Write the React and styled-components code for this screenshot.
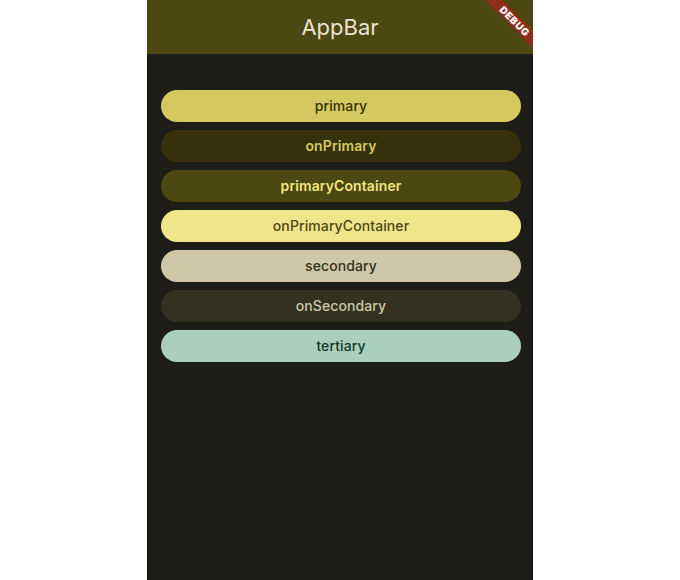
import styled, { createGlobalStyle } from "styled-components";

const swatches = [
  { name: "primary", bg: "#d4c95e", fg: "#363100", weight: 500 },
  { name: "onPrimary", bg: "#36310a", fg: "#d4c95e", weight: 600 },
  { name: "primaryContainer", bg: "#4d4712", fg: "#f1e580", weight: 600 },
  { name: "onPrimaryContainer", bg: "#efe68c", fg: "#4d4712", weight: 500 },
  { name: "secondary", bg: "#cec8a9", fg: "#33311c", weight: 500 },
  { name: "onSecondary", bg: "#333120", fg: "#cec8a9", weight: 500 },
  { name: "tertiary", bg: "#aad0bd", fg: "#133728", weight: 500 },
];

function App() {
  return (
    <>
      <GlobalStyle />
      <Page>
        <Phone>
          <AppBar>
            <Title>AppBar</Title>
            <Banner>
              <BannerText>DEBUG</BannerText>
            </Banner>
          </AppBar>
          <Body>
            {swatches.map((s) => (
              <Swatch key={s.name} $bg={s.bg} $fg={s.fg} $weight={s.weight}>
                {s.name}
              </Swatch>
            ))}
          </Body>
        </Phone>
      </Page>
    </>
  );
}

const GlobalStyle = createGlobalStyle`
  html, body {
    margin: 0;
    padding: 0;
    background: #ffffff;
  }
  body {
    font-family: Inter, "Noto Sans", sans-serif;
  }
`;

const Page = styled.div`
  display: flex;
  justify-content: center;
  width: 680px;
  height: 580px;
`;

const Phone = styled.div`
  width: 386px;
  height: 580px;
  display: flex;
  flex-direction: column;
  background: #1e1c16;
  overflow: hidden;
`;

const AppBar = styled.header`
  position: relative;
  height: 54px;
  flex-shrink: 0;
  display: flex;
  align-items: center;
  justify-content: center;
  background: #4c4713;
  overflow: hidden;
`;

const Title = styled.h1`
  margin: 0;
  font-size: 22px;
  font-weight: 400;
  color: #e9e3cf;
`;

const Banner = styled.div`
  position: absolute;
  top: 15px;
  right: -42px;
  width: 120px;
  height: 12px;
  display: flex;
  align-items: center;
  justify-content: center;
  background: rgba(183, 28, 28, 0.63);
  transform: rotate(45deg);
`;

const BannerText = styled.span`
  font-size: 10px;
  font-weight: 900;
  line-height: 1;
  color: #ffffff;
  letter-spacing: 0.6px;
`;

const Body = styled.main`
  display: flex;
  flex-direction: column;
  gap: 8px;
  padding: 36px 12px 0 14px;
`;

const Swatch = styled.div`
  height: 32px;
  border-radius: 16px;
  display: flex;
  align-items: center;
  justify-content: center;
  padding-bottom: 1px;
  box-sizing: border-box;
  background: ${(p) => p.$bg};
  color: ${(p) => p.$fg};
  font-size: 14px;
  font-weight: ${(p) => p.$weight};
  letter-spacing: 0.1px;
`;

export default App;
